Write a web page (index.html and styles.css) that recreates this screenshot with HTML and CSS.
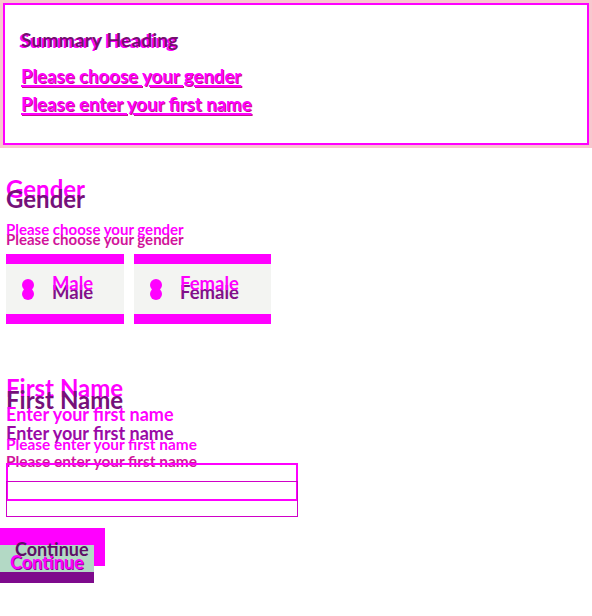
FILE: index.html
```html
<!DOCTYPE html>
<html lang="en">
<head>
<meta charset="utf-8">
<title>Form</title>
<link rel="stylesheet" href="styles.css">
</head>
<body>
<div class="summary-wrap">
  <div class="summary">
    <h2 class="summary-title">Summary Heading</h2>
    <a class="summary-link first" href="#gender">Please choose your gender</a>
    <a class="summary-link second" href="#first-name">Please enter your first name</a>
  </div>
</div>

<div class="section">
  <div class="layered legend">Gender<span class="ghost ghost-legend">Gender</span></div>
  <div class="layered hint hint-gender">Please choose your gender<span class="ghost ghost-hint">Please choose your gender</span></div>
  <div class="radios">
    <div class="radio-card male">
      <span class="dots"><span class="dot"></span><span class="dot dot-low"></span></span>
      <span class="layered radio-label">Male<span class="ghost ghost-radio">Male</span></span>
    </div>
    <div class="radio-card female">
      <span class="dots"><span class="dot"></span><span class="dot dot-low"></span></span>
      <span class="layered radio-label">Female<span class="ghost ghost-radio">Female</span></span>
    </div>
  </div>
</div>

<div class="section name-section">
  <div class="layered legend">First Name<span class="ghost ghost-name">First Name</span></div>
  <div class="layered label-line">Enter your first name<span class="ghost ghost-label">Enter your first name</span></div>
  <div class="layered hint hint-name">Please enter your first name<span class="ghost ghost-hint2">Please enter your first name</span></div>
  <div class="input input-a"></div>
  <div class="input input-b"></div>
</div>

<div class="button-wrap">
  <span class="btn-ghost"></span>
  <button class="btn" type="button">Continue</button>
  <span class="btn-ghost-text">Continue</span>
</div>
</body>
</html>
```

FILE: styles.css
```css
* { box-sizing: border-box; }
html { margin: 0; padding: 0; background: #ffffff; }
body {
  margin: 0;
  padding: 0;
  font-family: Lato, "Liberation Sans", sans-serif;
  width: 592px;
  height: 616px;
  overflow: hidden;
}

.summary-wrap {
  background: #f8c8cf;
  padding: 3px;
}
.summary {
  border: 2px solid #ff00ff;
  background: #ffffff;
  height: 142px;
  padding: 25px 16px 0 16px;
}
.summary-title {
  margin: 0;
  font-size: 19.4px;
  line-height: 20px;
  font-weight: 700;
  color: #74106f;
  text-shadow: -2px 1px 0 #ff00ff;
}
.summary-link {
  display: block;
  width: max-content;
  font-size: 18.6px;
  line-height: 19px;
  font-weight: 700;
  color: #ff00ff;
  text-decoration: underline;
  text-decoration-thickness: 2px;
  text-underline-offset: 2px;
  text-shadow: 1px 1px 0 #c4108c;
}
.summary-link.first { margin-top: 17px; }
.summary-link.second { margin-top: 9px; }

.section { padding-left: 6px; }

.layered { position: relative; display: block; z-index: 0; }
.ghost {
  position: absolute;
  left: 0;
  white-space: nowrap;
  color: #ff00ff;
}

.legend {
  font-size: 24px;
  line-height: 24px;
  font-weight: 700;
  color: #76107a;
  margin-top: 39px;
}
.ghost-legend { top: -10px; z-index: -1; }
.ghost-name { top: -12px; z-index: -1; }

.hint {
  font-size: 15px;
  line-height: 15px;
  font-weight: 700;
  color: #d0149a;
}
.hint-gender { margin-top: 21px; }
.ghost-hint { top: -10px; }

.radios {
  display: flex;
  gap: 10px;
  margin-top: 7px;
}
.radio-card {
  height: 70px;
  background: #f3f4f2;
  border-top: 10px solid #ff00ff;
  border-bottom: 10px solid #ff00ff;
  display: flex;
  align-items: center;
  padding-left: 16px;
}
.radio-card.male { width: 118px; }
.radio-card.female { width: 137px; }
.dots {
  display: flex;
  flex-direction: column;
  width: 12px;
}
.dot {
  width: 12px;
  height: 12px;
  border-radius: 50%;
  background: #ff00ff;
}
.dot-low { margin-top: -3px; }
.radio-label {
  font-size: 18.5px;
  line-height: 18px;
  font-weight: 700;
  color: #82108a;
  margin-left: 18px;
  margin-top: 6px;
}
.ghost-radio { top: -9px; }

.name-section .legend { margin-top: 64px; }
.label-line {
  font-size: 18px;
  line-height: 19px;
  font-weight: 700;
  color: #9a0aa6;
  margin-top: 12px;
}
.ghost-label { top: -19px; }
.hint-name { margin-top: 11px; font-size: 15.4px; }
.ghost-hint2 { top: -17px; }

.input {
  width: 292px;
  position: relative;
}
.input-a {
  height: 38px;
  border: 2px solid #ff00ff;
  margin-top: -6px;
}
.input-b {
  height: 36px;
  border: 1px solid #d000c8;
  margin-top: -20px;
}

.button-wrap {
  position: relative;
  margin-top: 28px;
  width: 105px;
  height: 40px;
}
.btn-ghost {
  position: absolute;
  left: 0;
  top: -17px;
  width: 105px;
  height: 38px;
  background: #ff00ff;
}
.btn {
  position: relative;
  display: block;
  width: 94px;
  height: 38px;
  margin: 0;
  padding: 8px 0 0 10px;
  border: 0;
  border-bottom: 11px solid #7e0a8c;
  background: #b3d9c5;
  font-family: Lato, "Liberation Sans", sans-serif;
  font-size: 18px;
  line-height: 19px;
  font-weight: 700;
  color: #ff00ff;
  text-align: left;
  text-shadow: 1px 1px 0 #8a0aa0;
}
.btn-ghost-text {
  position: absolute;
  left: 15px;
  top: -5px;
  font-size: 18px;
  line-height: 19px;
  font-weight: 700;
  color: #5e0f66;
}
```
